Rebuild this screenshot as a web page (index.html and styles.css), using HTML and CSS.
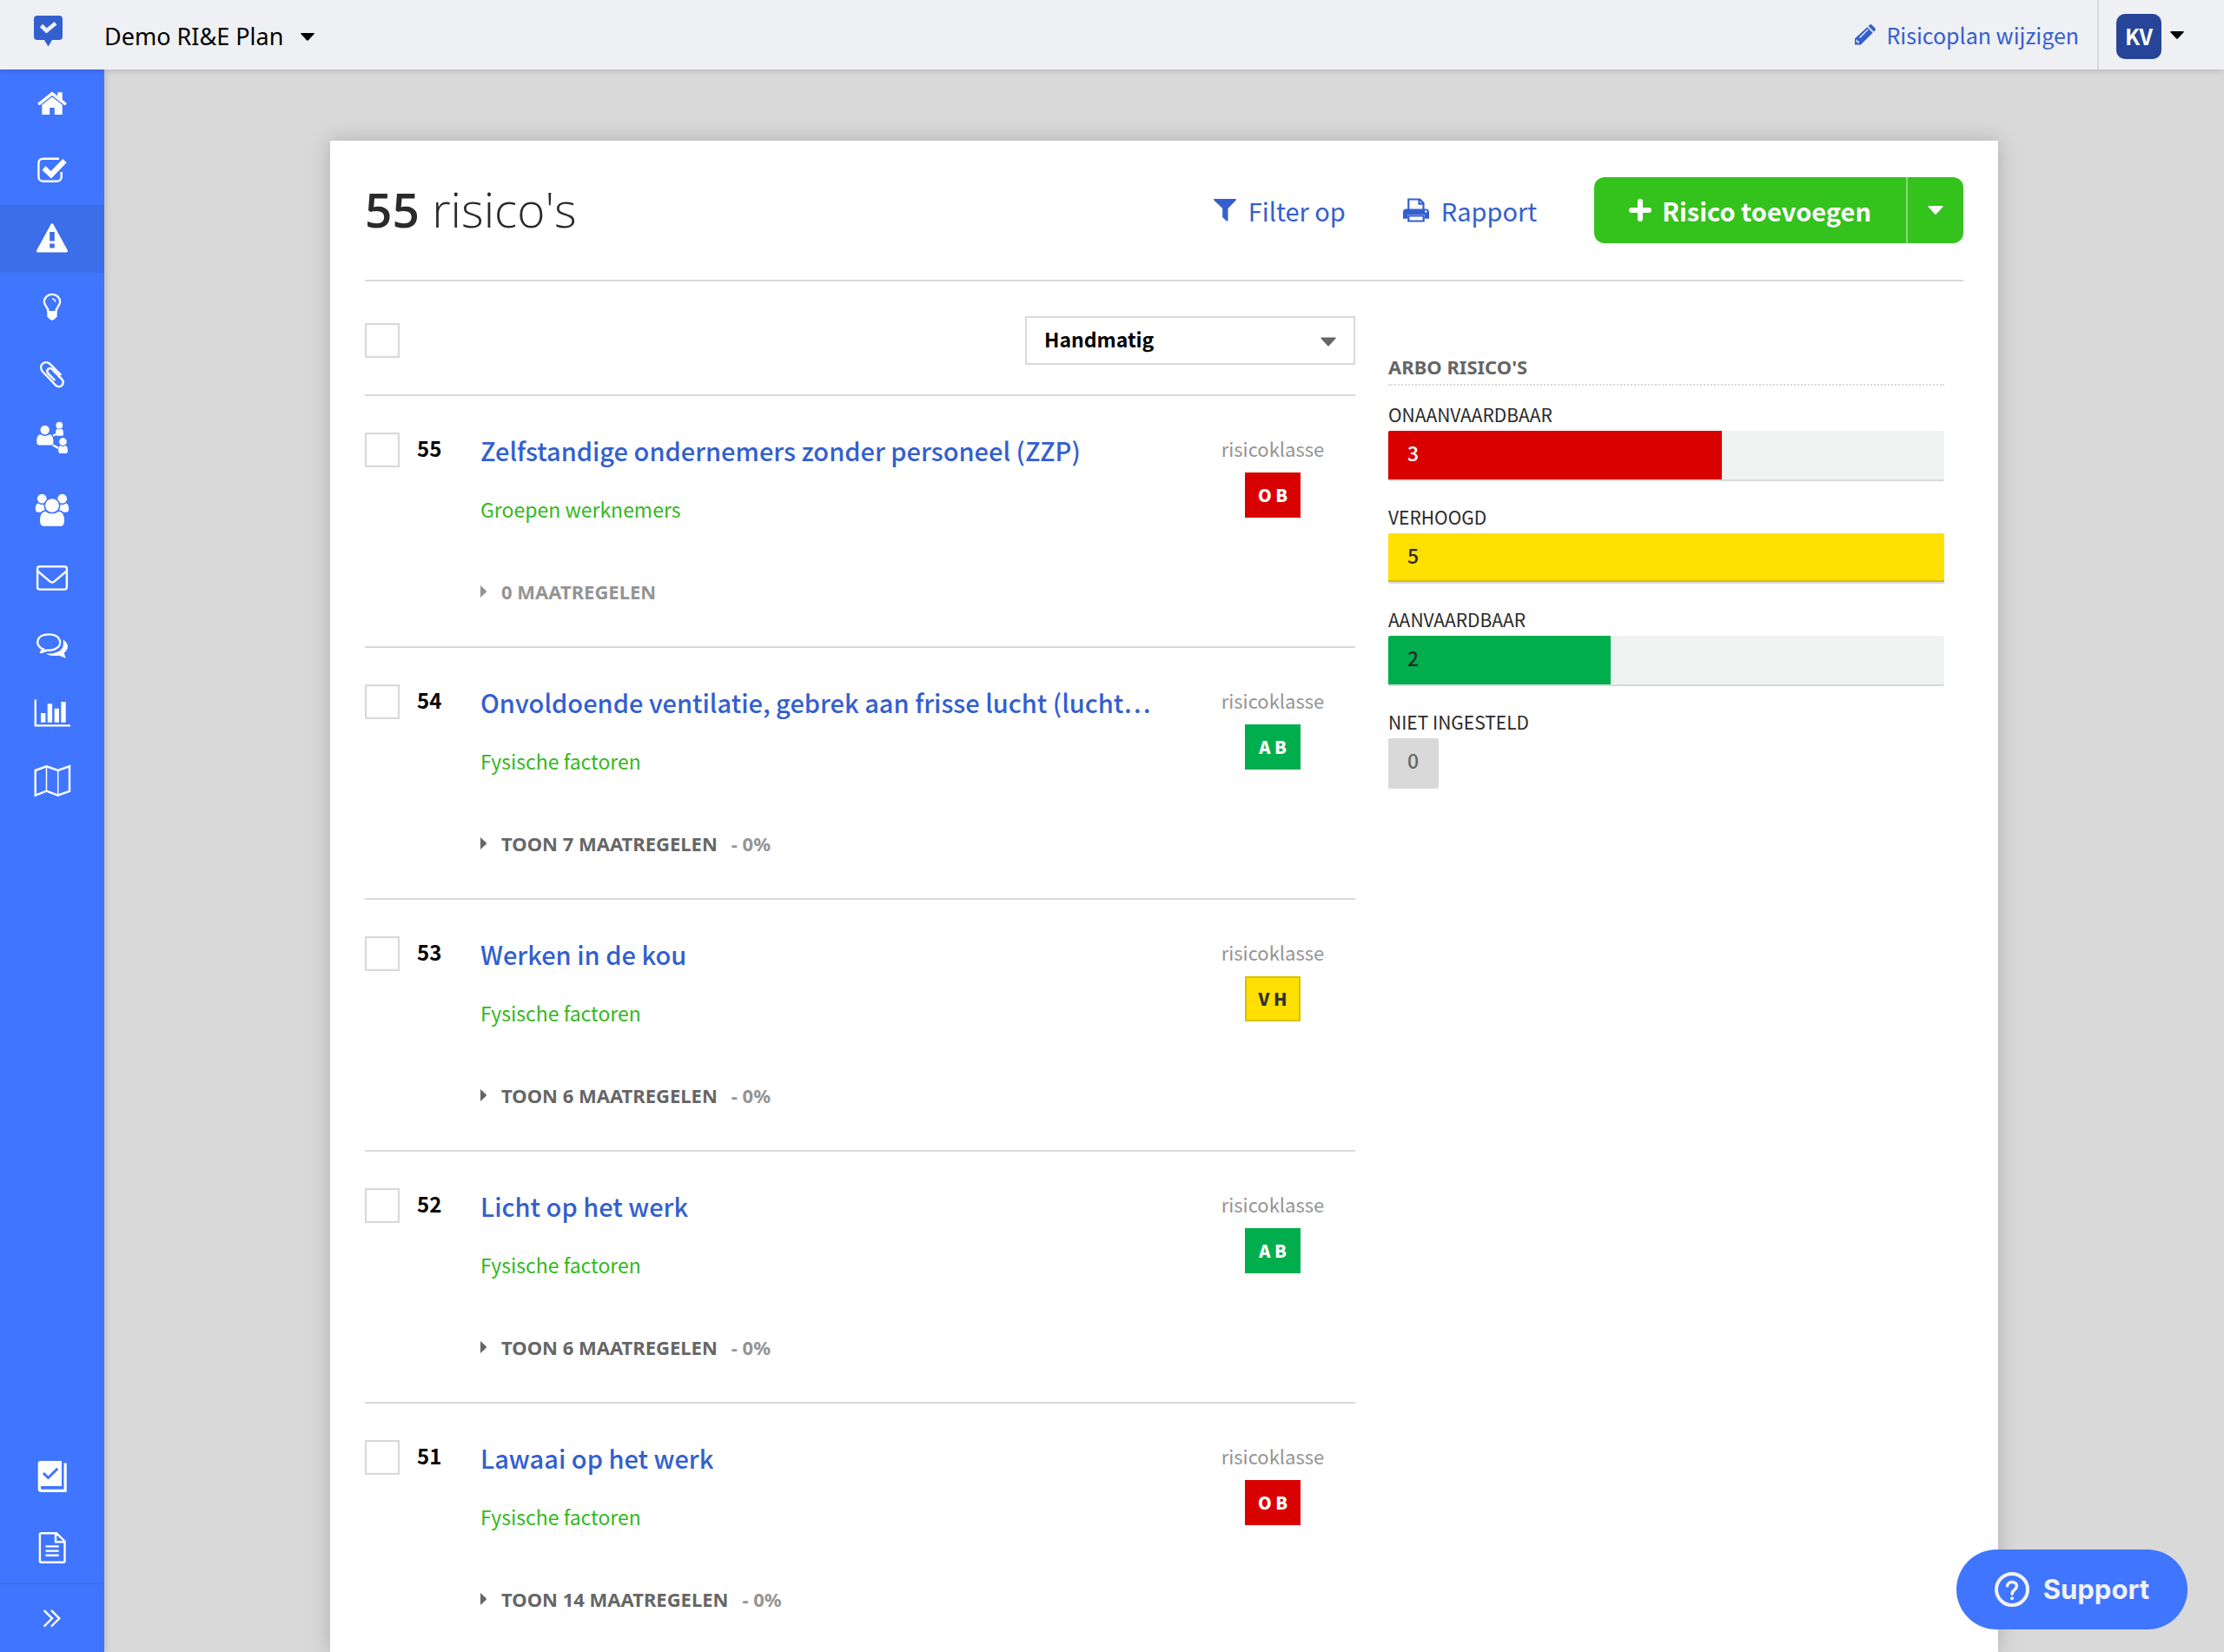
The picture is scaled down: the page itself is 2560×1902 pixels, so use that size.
FILE: index.html
```html
<!DOCTYPE html>
<html lang="nl">
<head>
    <meta charset="UTF-8">
    <meta name="viewport" content="width=device-width, initial-scale=1.0">
    <title>Demo RI&amp;E Plan - Risico's</title>
    <link rel="stylesheet" href="styles.css">
</head>
<body>
    <header class="topbar">
        <a href="#" class="logo" aria-label="Home">
            <svg width="34" height="36" viewBox="0 0 34 36">
                <path fill="#335fcf" d="M4 0h25a4 4 0 0 1 4 4v20a4 4 0 0 1-4 4h-8l-4.500 7.500L12 28H4a4 4 0 0 1-4-4V4a4 4 0 0 1 4-4z"/>
                <path fill="none" stroke="#eff0f3" stroke-width="4.600" d="M8.500 11.500l6 6L25 8.800"/>
            </svg>
        </a>
        <button class="plan-button">
            Demo RI&amp;E Plan
            <svg width="16" height="9" viewBox="0 0 16 9"><path d="M1 0h14q1.500 0 .5 1.200L9 8.300q-1 1-2 0L.5 1.200Q-.5 0 1 0z"/></svg>
        </button>
        <a href="#" class="edit-plan">
            <svg width="24" height="24" viewBox="0 0 24 24">
                <path fill="currentColor" d="M14.300 3.300l6.400 6.400L6.900 23.500H0v-6.900z"/>
                <path fill="currentColor" d="M15.600 2l1.300-1.300q1.400-1.200 2.800 0l3.600 3.600q1.200 1.400 0 2.800L22 8.400z"/>
                <path fill="none" stroke="#eff0f3" stroke-width="1.300" d="M5.500 15.500L15 6M2.200 17.800v2h2v2"/>
            </svg>
            Risicoplan wijzigen
        </a>
        <button class="user-button" aria-label="Gebruiker KV">
            <span class="avatar">KV</span>
            <svg width="16" height="9" viewBox="0 0 16 9"><path d="M1 0h14q1.500 0 .5 1.200L9 8.300q-1 1-2 0L.5 1.200Q-.5 0 1 0z"/></svg>
        </button>
    </header>

    <div class="layout">
        <!-- Side navigation -->
        <nav class="sidebar">
            <a href="#" class="nav-item" aria-label="Home">
                <svg class="nav-icon" viewBox="-2 -2 44 44">
                    <path class="line thick" d="M5.300 20.300L20 8.700l14.700 11.600"/>
                    <path d="M20 12.500L31.700 21.700V33H22.800V25H17.200V33H8.300V21.700zM26.300 7.300h5.400v9l-5.400-4.500z"/>
                </svg>
            </a>
            <a href="#" class="nav-item" aria-label="Taken">
                <svg class="nav-icon" viewBox="-2 -2 44 44">
                    <path class="line" d="M28 5.700H9.400a5 5 0 0 0-5 5v16a5 5 0 0 0 5 5h16.300a5 5 0 0 0 5-5V21"/>
                    <path class="line heavy" d="M10.500 16.500l8.300 7.700L34.500 8.200"/>
                </svg>
            </a>
            <a href="#" class="nav-item active" aria-label="Risico's">
                <svg class="nav-icon" viewBox="-2 -2 44 44">
                    <path class="rounded" d="M20 3.800L36.500 34H3.500z"/>
                    <path class="cutout" d="M17.200 12h5.600v10.500h-5.600zM17.200 25.500h5.600v5h-5.600z"/>
                </svg>
            </a>
            <a href="#" class="nav-item" aria-label="Maatregelen">
                <svg class="nav-icon" viewBox="-2 -2 44 44">
                    <path class="line" d="M15.500 26C15.500 20 10.900 19.500 10.900 14.400A9.100 8.500 0 0 1 29.100 14.400C29.100 19.500 24.500 20 24.500 26"/>
                    <path class="line thin" d="M20 11q3.500.3 3.700 3.500"/>
                    <path d="M14.300 25h11.400v6.500L23 34.300l-3 1.700-3-1.700-2.700-2.800z"/>
                </svg>
            </a>
            <a href="#" class="nav-item" aria-label="Bijlagen">
                <svg class="nav-icon" viewBox="-2 -2 44 44">
                    <path class="line" d="M30.300 20.800L17.900 8.300C12 2.500 3.500 9.500 8.800 16.500L24.200 32.600C29 37 35.500 31 31.200 25.600L20.300 14.300C16.500 11 12.500 15 15.300 18.900L23.300 27"/>
                </svg>
            </a>
            <a href="#" class="nav-item" aria-label="Organisatie">
                <svg class="nav-icon" viewBox="-2 3 44 44">
                    <circle cx="11.700" cy="11" r="5.200"/>
                    <path d="M6.500 16.200q5.200 3.600 10.400 0c3.500.3 4.700 4.300 4.500 8.800q0 3.400-3 3.400H5.300q-3 0-3-3.400c-.2-4.500.7-8.500 4.200-8.800z"/>
                    <circle cx="28.300" cy="5.700" r="3.900"/>
                    <path d="M26 9.800q2.300 1.600 4.800 0c1.700.5 2.300 2.900 2.200 5.900q0 2-1.600 2h-5.700q-1.700 0-1.700-2c0-3 .3-5.400 2-5.900z"/>
                    <circle cx="32.400" cy="24.500" r="4.400"/>
                    <path d="M29.500 29q3 2 5.800 0c2 .4 2.800 3 2.700 6.600q0 2.400-2 2.400h-6.800q-2 0-2-2.400c0-3.600.4-6.200 2.300-6.600z"/>
                    <path class="line" d="M21.300 17.700l2.500-1.800M20.700 28.300l6.300 3.600"/>
                </svg>
            </a>
            <a href="#" class="nav-item" aria-label="Groepen">
                <svg class="nav-icon" viewBox="-2 -2 44 44">
                    <circle cx="8.300" cy="7.200" r="5.400"/>
                    <circle cx="31.700" cy="7.200" r="5.400"/>
                    <path d="M4 12.500q4.300 3 8 .7V22.700H4.500q-3.500 0-3.700-3.200c0-3.500.6-6.500 3.200-7zM36 12.500q-4.300 3-8 .7V22.700h7.500q3.500 0 3.700-3.200c0-3.500-.6-6.500-3.200-7z"/>
                    <circle class="outlined" cx="20" cy="15.200" r="8.700"/>
                    <path class="outlined" d="M12.500 21q7.500 5.500 15 0c6 .5 7.500 6 7.200 12.500q-.3 6-5 6H10.300q-4.700 0-5-6C5 27 6.500 21.500 12.500 21z"/>
                </svg>
            </a>
            <a href="#" class="nav-item" aria-label="Berichten">
                <svg class="nav-icon" viewBox="-2 -2 44 44">
                    <rect class="line" x="3.100" y="7.200" width="33.800" height="26.400" rx="2.500"/>
                    <path class="line" d="M3.300 12.500L16.800 23.800Q20 27 23.200 23.800L36.700 12.500"/>
                </svg>
            </a>
            <a href="#" class="nav-item" aria-label="Overleg">
                <svg class="nav-icon" viewBox="-2 -2 44 44">
                    <path class="line" d="M10 24.700C-1 20.500 1.500 7.400 16 7.400S32 19 25.500 23C22 25.700 18 26.100 14.500 25.600L6.500 28.300z"/>
                    <path d="M32.800 13.500c6.500 4 7 11 .9 15.200l2 6-7.500-3c-5 .8-12 .2-15.200-2.200 11 .5 19.500-3 19.800-10.500z"/>
                </svg>
            </a>
            <a href="#" class="nav-item" aria-label="Statistieken">
                <svg class="nav-icon" viewBox="-2 -2 44 44">
                    <path class="line" d="M.8 4.500V34.400H41"/>
                    <path d="M7 20h5.400v10.700H7zM14.700 9.300h5.400v21.400h-5.400zM22.600 14.700H28v16h-5.400zM30.300 7h5.400v23.700h-5.400z"/>
                </svg>
            </a>
            <a href="#" class="nav-item" aria-label="Kaart">
                <svg class="nav-icon" viewBox="-2 -2 44 44">
                    <path class="line" d="M.7 8l12.800-4.700L26.700 8 40 3.300V32l-13.300 4.700L13.500 31.700.7 36.700z"/>
                    <path class="line thin" d="M13.500 3.500v28M26.700 8v28.500"/>
                </svg>
            </a>
            <div class="nav-bottom">
                <a href="#" class="nav-item" aria-label="Handboek">
                    <svg class="nav-icon" viewBox="-2 -2 44 44">
                        <path d="M6.500 2H31v29H8.500q-1.800 0-1.800 1.800t1.800 1.900h25V4.500h3.200V38H7.500q-3.800 0-3.800-4V5q0-3 2.800-3z"/>
                        <path class="line mark" d="M10 16l5.500 5.500L26.300 10.700"/>
                    </svg>
                </a>
                <a href="#" class="nav-item" aria-label="Documenten">
                    <svg class="nav-icon" viewBox="-2 -2 44 44">
                        <path class="line" d="M7.500 3.200H25l9.500 9.300v22.800q0 1.500-1.500 1.500H7.500q-1.600 0-1.600-1.500V4.700q0-1.500 1.600-1.500zM24 3.500v9.700h10.300M12.500 18.400h15.200M12.500 23.600h15.200M12.500 28.700h15.200"/>
                    </svg>
                </a>
            </div>
            <button class="nav-toggle" aria-label="Menu uitklappen">
                <svg class="nav-icon" viewBox="-2 -2 44 44">
                    <path class="line" stroke-linecap="round" d="M11.300 11.700l8.700 8.600-8.700 8.700M19.600 11.700l8.700 8.600-8.700 8.700"/>
                </svg>
            </button>
        </nav>

        <main class="content">
            <div class="card">
                <div class="card-header">
                    <h1><strong>55</strong> risico's</h1>
                    <a href="#" class="header-link">
                        <svg width="26" height="26" viewBox="0 0 26 26"><path fill="currentColor" d="M.7 0h24.600q1 .5.4 1.400L16.500 11v14q-.5 1-1.500.5l-4.800-4.300V11L.3 1.400Q-.3.500.7 0z"/></svg>
                        Filter op
                    </a>
                    <a href="#" class="header-link">
                        <svg width="30" height="28" viewBox="0 0 30 28">
                            <path fill="none" stroke="currentColor" stroke-width="2.200" d="M6.300 14V1.500h13l4.200 4.200V14M18.500 1.500v5.200h5M6.300 20.500h17.400v6H6.300z"/>
                            <path fill="currentColor" d="M4 12.500h22q4 0 4 4v7.200h-5v-4.500H5v4.500H0v-7.200q0-4 4-4z"/>
                            <circle fill="#fff" cx="26.300" cy="15.500" r="1.200"/>
                        </svg>
                        Rapport
                    </a>
                    <div class="button-group">
                        <button class="add-button">
                            <svg width="26" height="26" viewBox="0 0 26 26"><path stroke="#fff" stroke-width="6" stroke-linecap="round" d="M13 3v20M3 13h20"/></svg>
                            Risico toevoegen
                        </button>
                        <button class="add-more" aria-label="Meer opties">
                            <svg width="18" height="10" viewBox="0 0 16 9"><path fill="#fff" d="M1 0h14q1.500 0 .5 1.200L9 8.300q-1 1-2 0L.5 1.200Q-.5 0 1 0z"/></svg>
                        </button>
                    </div>
                </div>

                <div class="columns">
                    <!-- Risk list -->
                    <section class="risk-list">
                        <div class="list-tools">
                            <input type="checkbox" class="check" aria-label="Alles selecteren">
                            <div class="sort">
                                <select class="sort-select" aria-label="Sorteren">
                                    <option>Handmatig</option>
                                </select>
                                <svg class="sort-caret" width="18" height="11" viewBox="0 0 16 9"><path fill="#666" d="M1 0h14q1.500 0 .5 1.200L9 8.300q-1 1-2 0L.5 1.200Q-.5 0 1 0z"/></svg>
                            </div>
                        </div>

                        <article class="risk">
                            <input type="checkbox" class="check" id="risk55">
                            <label class="risk-number" for="risk55">55</label>
                            <div class="risk-body">
                                <a href="#" class="risk-title">Zelfstandige ondernemers zonder personeel (ZZP)</a>
                                <a href="#" class="risk-category">Groepen werknemers</a>
                                <button class="measures empty">
                                    <svg width="8" height="14" viewBox="0 0 8 14"><path fill="currentColor" d="M0 0l6.500 6q1 1 0 2L0 14z"/></svg>
                                    0 maatregelen
                                </button>
                            </div>
                            <div class="risk-class">
                                risicoklasse
                                <span class="badge red">O B</span>
                            </div>
                        </article>

                        <article class="risk">
                            <input type="checkbox" class="check" id="risk54">
                            <label class="risk-number" for="risk54">54</label>
                            <div class="risk-body">
                                <a href="#" class="risk-title">Onvoldoende ventilatie, gebrek aan frisse lucht (lucht…</a>
                                <a href="#" class="risk-category">Fysische factoren</a>
                                <button class="measures">
                                    <svg width="8" height="14" viewBox="0 0 8 14"><path fill="currentColor" d="M0 0l6.500 6q1 1 0 2L0 14z"/></svg>
                                    Toon 7 maatregelen <span class="progress">- 0%</span>
                                </button>
                            </div>
                            <div class="risk-class">
                                risicoklasse
                                <span class="badge green">A B</span>
                            </div>
                        </article>

                        <article class="risk">
                            <input type="checkbox" class="check" id="risk53">
                            <label class="risk-number" for="risk53">53</label>
                            <div class="risk-body">
                                <a href="#" class="risk-title">Werken in de kou</a>
                                <a href="#" class="risk-category">Fysische factoren</a>
                                <button class="measures">
                                    <svg width="8" height="14" viewBox="0 0 8 14"><path fill="currentColor" d="M0 0l6.500 6q1 1 0 2L0 14z"/></svg>
                                    Toon 6 maatregelen <span class="progress">- 0%</span>
                                </button>
                            </div>
                            <div class="risk-class">
                                risicoklasse
                                <span class="badge yellow">V H</span>
                            </div>
                        </article>

                        <article class="risk">
                            <input type="checkbox" class="check" id="risk52">
                            <label class="risk-number" for="risk52">52</label>
                            <div class="risk-body">
                                <a href="#" class="risk-title">Licht op het werk</a>
                                <a href="#" class="risk-category">Fysische factoren</a>
                                <button class="measures">
                                    <svg width="8" height="14" viewBox="0 0 8 14"><path fill="currentColor" d="M0 0l6.500 6q1 1 0 2L0 14z"/></svg>
                                    Toon 6 maatregelen <span class="progress">- 0%</span>
                                </button>
                            </div>
                            <div class="risk-class">
                                risicoklasse
                                <span class="badge green">A B</span>
                            </div>
                        </article>

                        <article class="risk">
                            <input type="checkbox" class="check" id="risk51">
                            <label class="risk-number" for="risk51">51</label>
                            <div class="risk-body">
                                <a href="#" class="risk-title">Lawaai op het werk</a>
                                <a href="#" class="risk-category">Fysische factoren</a>
                                <button class="measures">
                                    <svg width="8" height="14" viewBox="0 0 8 14"><path fill="currentColor" d="M0 0l6.500 6q1 1 0 2L0 14z"/></svg>
                                    Toon 14 maatregelen <span class="progress">- 0%</span>
                                </button>
                            </div>
                            <div class="risk-class">
                                risicoklasse
                                <span class="badge red">O B</span>
                            </div>
                        </article>
                    </section>

                    <!-- Totals per risk class -->
                    <aside class="stats">
                        <h2>Arbo risico's</h2>
                        <div class="stat">
                            <div class="stat-label">Onaanvaardbaar</div>
                            <div class="bar"><div class="bar-fill red" style="width: 60%">3</div></div>
                        </div>
                        <div class="stat">
                            <div class="stat-label">Verhoogd</div>
                            <div class="bar"><div class="bar-fill yellow" style="width: 100%">5</div></div>
                        </div>
                        <div class="stat">
                            <div class="stat-label">Aanvaardbaar</div>
                            <div class="bar"><div class="bar-fill green" style="width: 40%">2</div></div>
                        </div>
                        <div class="stat">
                            <div class="stat-label">Niet ingesteld</div>
                            <div class="bar none"><div class="bar-fill">0</div></div>
                        </div>
                    </aside>
                </div>
            </div>
        </main>
    </div>

    <button class="support">
        <svg width="40" height="40" viewBox="0 0 40 40" fill="none" stroke="currentColor">
            <circle cx="20" cy="20" r="18" stroke-width="4"/>
            <path stroke-width="3.600" stroke-linecap="round" d="M14.600 15.800c.8-6 10.800-5.600 10.800.3 0 4.200-5.200 4.200-5.400 9"/>
            <circle cx="20" cy="30.200" r="2" fill="currentColor" stroke="none"/>
        </svg>
        Support
    </button>
</body>
</html>
```

FILE: styles.css
```css
* {
    box-sizing: border-box;
}

body {
    margin: 0;
    height: 100vh;
    display: flex;
    flex-direction: column;
    background-color: #d9d9d9;
    color: #000;
    font-family: "Noto Sans CJK JP", "Open Sans", sans-serif;
    font-size: 22px;
    line-height: 32px;
}

a {
    color: #335fcf;
    text-decoration: none;
}

button {
    border: none;
    padding: 0;
    background: none;
    color: inherit;
    font: inherit;
    cursor: pointer;
}

svg {
    flex: none;
    display: block;
}

/* Top bar */
.topbar {
    flex: none;
    height: 80px;
    display: flex;
    align-items: center;
    background-color: #eff0f3;
    box-shadow: 0 0 8px rgba(0, 0, 0, 0.2);
    position: relative;
    z-index: 2;
}

.logo {
    width: 120px;
    padding: 0 0 8px 39px;
}

.plan-button {
    display: flex;
    align-items: center;
    gap: 20px;
    font-family: "Noto Sans", sans-serif;
    font-size: 27px;
    padding-top: 4px;
}

.edit-plan {
    margin-left: auto;
    padding-right: 21px;
    display: flex;
    align-items: center;
    gap: 12px;
    font-size: 25px;
}

.user-button {
    height: 80px;
    padding: 0 46px 0 20px;
    border-left: 2px solid #d9d9d9;
    display: flex;
    align-items: center;
    gap: 10px;
}

.avatar {
    width: 52px;
    height: 52px;
    margin-top: 4px;
    border-radius: 10px;
    background-color: #274598;
    color: #fff;
    font-size: 25px;
    font-weight: 700;
    line-height: 50px;
    text-align: center;
}

/* Side navigation */
.layout {
    flex: 1;
    min-height: 0;
    display: flex;
}

.sidebar {
    --nav-color: #4075ff;
    flex: none;
    width: 120px;
    display: flex;
    flex-direction: column;
    background-color: var(--nav-color);
    box-shadow: 0 0 8px rgba(0, 0, 0, 0.2);
}

.nav-item {
    height: 78px;
    display: flex;
    align-items: center;
    justify-content: center;
}

.nav-item.active {
    --nav-color: #3c6eea;
    background-color: var(--nav-color);
}

.nav-bottom {
    margin-top: auto;
}

.nav-bottom .nav-item {
    height: 82px;
    padding-top: 2px;
}

.nav-toggle {
    height: 80px;
    border-top: 2px solid #3c6eea;
    display: flex;
    align-items: center;
    justify-content: center;
}

.nav-icon {
    width: 44px;
    height: 44px;
    fill: #fff;
    overflow: visible;
}

.nav-icon .line {
    fill: none;
    stroke: #fff;
    stroke-width: 2.4px;
}

.nav-icon .thin {
    stroke-width: 1.5px;
}

.nav-icon .thick {
    stroke-width: 3.4px;
    stroke-linecap: round;
}

.nav-icon .heavy {
    stroke-width: 6px;
}

.nav-icon .mark {
    stroke: var(--nav-color);
    stroke-width: 3px;
}

.nav-icon .rounded {
    stroke: #fff;
    stroke-width: 3px;
    stroke-linejoin: round;
}

.nav-icon .cutout {
    fill: var(--nav-color);
}

.nav-icon .outlined {
    stroke: var(--nav-color);
    stroke-width: 1.6px;
}

/* Content card */
.content {
    flex: 1;
    min-width: 0;
    overflow-y: auto;
    scrollbar-width: none;
    padding: 82px 40px 0;
}

.card {
    max-width: 1920px;
    margin: 0 auto;
    padding: 0 40px;
    background-color: #fff;
    box-shadow: 0 0 24px rgba(0, 0, 0, 0.2);
}

.card-header {
    height: 162px;
    border-bottom: 2px solid #d9d9d9;
    display: flex;
    align-items: center;
}

h1 {
    margin: 0 auto 0 0;
    padding-bottom: 2px;
    color: #2a2a2a;
    font-family: "Open Sans", sans-serif;
    font-size: 55px;
    font-weight: 300;
    line-height: 64px;
}

h1 strong {
    font-weight: 600;
}

.header-link {
    display: flex;
    align-items: center;
    gap: 14px;
    margin-right: 66px;
    font-size: 29px;
}

.button-group {
    height: 76px;
    display: flex;
    border-radius: 12px;
    overflow: hidden;
    background-color: #34c21d;
}

.add-button {
    padding: 0 40px;
    display: flex;
    align-items: center;
    gap: 12px;
    color: #fff;
    font-size: 29px;
    font-weight: 700;
}

.add-more {
    width: 66px;
    border-left: 2px solid #85da77;
    display: flex;
    align-items: center;
    justify-content: center;
}

.columns {
    display: flex;
    gap: 38px;
}

/* Risk list */
.risk-list {
    flex: 1;
    min-width: 0;
}

.list-tools {
    padding: 40px 0 34px;
    display: flex;
    align-items: center;
    justify-content: space-between;
}

.check {
    appearance: none;
    flex: none;
    width: 40px;
    height: 40px;
    margin: 0;
    border: 2px solid #d9d9d9;
    background-color: #fff;
    box-shadow: inset 0 0 2px rgba(0, 0, 0, 0.1);
}

.sort {
    position: relative;
    width: 380px;
}

.sort-select {
    appearance: none;
    display: block;
    width: 100%;
    height: 56px;
    padding: 0 20px 4px;
    border: 2px solid #d9d9d9;
    border-radius: 0;
    background-color: #fff;
    color: #000;
    font: inherit;
    font-size: 23px;
    font-weight: 700;
}

.sort-caret {
    position: absolute;
    right: 22px;
    top: 24px;
    pointer-events: none;
}

.risk {
    height: 290px;
    padding-top: 40px;
    border-top: 2px solid #d9d9d9;
    display: flex;
}

.risk .check {
    margin-top: 2px;
}

.risk-number {
    width: 93px;
    padding-left: 20px;
    font-size: 24px;
    font-weight: 700;
    line-height: 40px;
}

.risk-body {
    flex: 1;
    min-width: 0;
    display: flex;
    flex-direction: column;
    align-items: flex-start;
}

.risk-title {
    max-width: 100%;
    overflow: hidden;
    text-overflow: ellipsis;
    white-space: nowrap;
    font-size: 29px;
    font-weight: 500;
    line-height: 44px;
}

.risk-category {
    margin: 30px 0 63px;
    color: #34b81d;
    font-size: 23px;
}

.measures {
    display: flex;
    align-items: center;
    gap: 16px;
    color: #666;
    font-family: "Noto Sans", sans-serif;
    font-size: 22px;
    font-weight: 700;
    text-transform: uppercase;
}

.measures.empty,
.progress {
    color: #949494;
}

.risk-class {
    width: 190px;
    flex: none;
    padding-top: 4px;
    display: flex;
    flex-direction: column;
    align-items: center;
    gap: 12px;
    color: #949494;
    font-size: 22px;
}

.badge {
    width: 64px;
    height: 52px;
    font-size: 20px;
    font-weight: 900;
    line-height: 52px;
    text-align: center;
}

.red {
    background-color: #d80000;
    color: #fff;
}

.green {
    background-color: #00ae4d;
    color: #fff;
}

.yellow {
    background-color: #ffe000;
    color: #333;
}

.badge.yellow {
    border: 2px solid #d9c000;
    line-height: 48px;
}

/* Totals */
.stats {
    width: 640px;
    flex: none;
    margin: 82px 22px 0 0;
    text-transform: uppercase;
}

h2 {
    margin: 0 0 18px;
    padding-bottom: 4px;
    border-bottom: 2px dotted #d9d9d9;
    color: #666;
    font-family: "Noto Sans", sans-serif;
    font-size: 22px;
    font-weight: 700;
    line-height: 32px;
}

.stat {
    margin-bottom: 26px;
}

.stat-label {
    padding-bottom: 4px;
    color: #2a2a2a;
    font-size: 21px;
    line-height: 30px;
}

.bar {
    border-bottom: 2px solid #d9d9d9;
    border-radius: 2px;
    background-color: #f0f2f1;
    overflow: hidden;
}

.bar-fill {
    height: 56px;
    padding-left: 22px;
    font-size: 23px;
    font-weight: 500;
    line-height: 50px;
}

.bar-fill.yellow {
    border-bottom: 2px solid #d9c000;
}

.bar-fill.yellow,
.bar-fill.green {
    color: #2a2a2a;
}

.bar.none {
    width: 58px;
    background-color: #d9d9d9;
    color: #666;
}

/* Support button */
.support {
    position: fixed;
    right: 42px;
    bottom: 26px;
    height: 92px;
    padding: 0 44px;
    border-radius: 46px;
    background-color: #4075ff;
    color: #f2f2f2;
    display: flex;
    align-items: center;
    gap: 16px;
    font-family: Inter, sans-serif;
    font-size: 31px;
    font-weight: 700;
    z-index: 3;
}
```
